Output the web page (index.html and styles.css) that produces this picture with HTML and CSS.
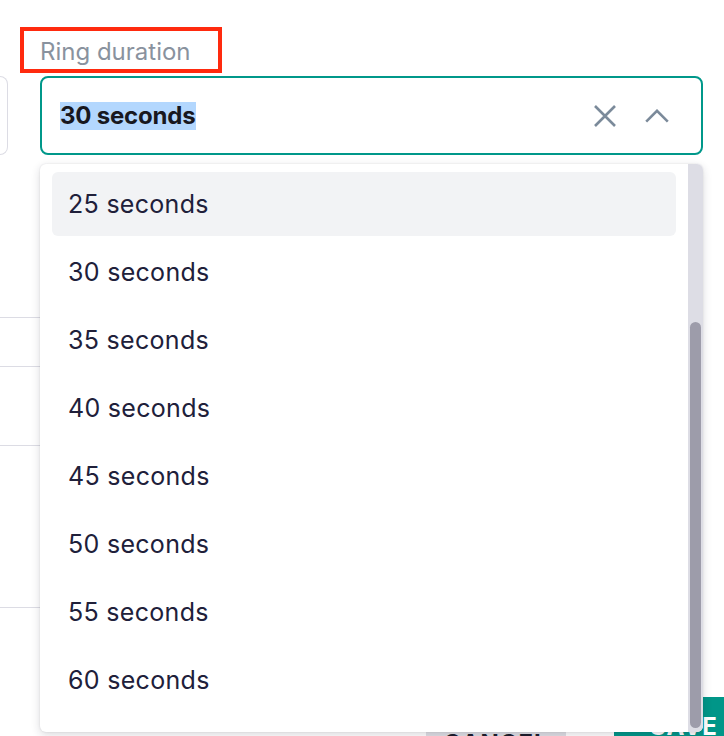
FILE: index.html
```html
<!DOCTYPE html>
<html lang="en">
<head>
<meta charset="utf-8">
<title>Ring duration</title>
<link rel="stylesheet" href="styles.css">
</head>
<body>
<div class="page">
  <div class="form">
    <div class="side">
      <div class="side-field"></div>
      <div class="side-spacer"></div>
      <div class="side-row row-a"></div>
      <div class="side-row row-b"></div>
      <div class="side-row row-c"></div>
      <div class="side-row row-d"></div>
    </div>
    <div class="main">
      <div class="field">
        <div class="label">Ring duration</div>
        <div class="select">
          <span class="value"><span class="selected-text">30 seconds</span></span>
          <span class="icons">
            <svg class="icon-x" width="24" height="24" viewBox="0 0 24 24" aria-hidden="true"><path d="M2 2 L22 22 M22 2 L2 22" fill="none" stroke="currentColor" stroke-width="2.6"/></svg>
            <svg class="icon-chevron" width="24" height="14" viewBox="0 0 24 14" aria-hidden="true"><path d="M1.2 12.6 L12 1.8 L22.8 12.6" fill="none" stroke="currentColor" stroke-width="2.6"/></svg>
          </span>
        </div>
        <div class="dropdown">
          <ul class="options">
            <li class="option active">25 seconds</li>
            <li class="option">30 seconds</li>
            <li class="option">35 seconds</li>
            <li class="option">40 seconds</li>
            <li class="option">45 seconds</li>
            <li class="option">50 seconds</li>
            <li class="option">55 seconds</li>
            <li class="option">60 seconds</li>
          </ul>
          <div class="scrollbar"><div class="thumb"></div></div>
        </div>
      </div>
    </div>
  </div>
  <div class="actions">
    <button class="btn btn-cancel">CANCEL</button>
    <button class="btn btn-save">SAVE</button>
  </div>
</div>
</body>
</html>
```
FILE: styles.css
```css
html, body {
  margin: 0;
  padding: 0;
  background: #ffffff;
}
body {
  font-family: "Inter", "Noto Sans", "Liberation Sans", sans-serif;
  width: 724px;
  height: 736px;
  overflow: hidden;
}
.page {
  width: 724px;
  height: 736px;
  display: flex;
  flex-direction: column;
  overflow: hidden;
}
.form {
  height: 697px;
  flex: none;
  display: flex;
}
.side {
  width: 40px;
  flex: none;
  padding-top: 76px;
  display: flex;
  flex-direction: column;
}
.side-field {
  width: 8px;
  height: 79px;
  box-sizing: border-box;
  border: 1.5px solid #dcdce4;
  border-left: none;
  border-radius: 0 8px 8px 0;
}
.side-spacer { height: 162px; }
.side-row { border-top: 1px solid #dcdce4; }
.row-a { height: 48px; }
.row-b { height: 78px; }
.row-c { height: 161px; }
.row-d { height: 80px; }

.main {
  flex: 1;
  padding-right: 21px;
}
.field {
  position: relative;
  padding-top: 27px;
}
.label {
  margin-left: -20px;
  width: 202px;
  height: 46px;
  box-sizing: border-box;
  border: 4px solid #ff2a0e;
  padding-left: 16px;
  padding-top: 3px;
  display: flex;
  align-items: center;
  font-size: 24px;
  color: #89929e;
}
.select {
  margin-top: 3px;
  height: 79px;
  box-sizing: border-box;
  border: 2px solid #00988a;
  border-radius: 8px;
  padding: 0 32px 0 18px;
  display: flex;
  align-items: center;
  justify-content: space-between;
}
.value {
  font-size: 24px;
  font-weight: 700;
  color: #18181f;
  letter-spacing: -0.2px;
}
.selected-text {
  background: #b3d7fe;
  display: inline-block;
  line-height: 28px;
  padding: 0 1px 0 0;
}
.icons {
  display: flex;
  align-items: center;
  gap: 28px;
  color: #7b8a9a;
}
.icon-x { display: block; }
.icon-chevron { display: block; }

.dropdown {
  position: absolute;
  left: 0;
  right: 0;
  top: calc(100% + 9px);
  height: 568px;
  background: #ffffff;
  border-radius: 6px;
  box-shadow: 0 3px 10px rgba(30, 30, 50, 0.16), 0 0 2px rgba(30, 30, 50, 0.12);
  display: flex;
  overflow: hidden;
}
.options {
  list-style: none;
  margin: 0;
  padding: 8px 12px 0 12px;
  flex: 1;
  display: flex;
  flex-direction: column;
  gap: 4px;
}
.option {
  height: 64px;
  flex: none;
  display: flex;
  align-items: center;
  padding-left: 16px;
  font-size: 25px;
  color: #20203a;
  border-radius: 6px;
  letter-spacing: 0.3px;
}
.option.active { background: #f2f3f5; }
.scrollbar {
  width: 15px;
  flex: none;
  background: #dddde5;
  display: flex;
  flex-direction: column;
  justify-content: flex-end;
  align-items: center;
  padding-bottom: 4px;
  box-sizing: border-box;
}
.thumb {
  width: 11px;
  height: 406px;
  border-radius: 6px;
  background: #9d9caa;
}

.actions {
  display: flex;
  justify-content: flex-end;
  align-items: flex-start;
  gap: 48px;
  margin-right: -30px;
}
.btn {
  font-family: "Inter", "Noto Sans", "Liberation Sans", sans-serif;
  font-size: 24px;
  font-weight: 700;
  border: none;
  width: 140px;
  height: 56px;
  line-height: 28px;
  padding: 16px 0 12px;
  letter-spacing: 1px;
}
.btn-cancel {
  margin-top: 17px;
  background: #dfdfe5;
  color: #1d1d2c;
}
.btn-save {
  background: #009688;
  color: #ffffff;
}
```
